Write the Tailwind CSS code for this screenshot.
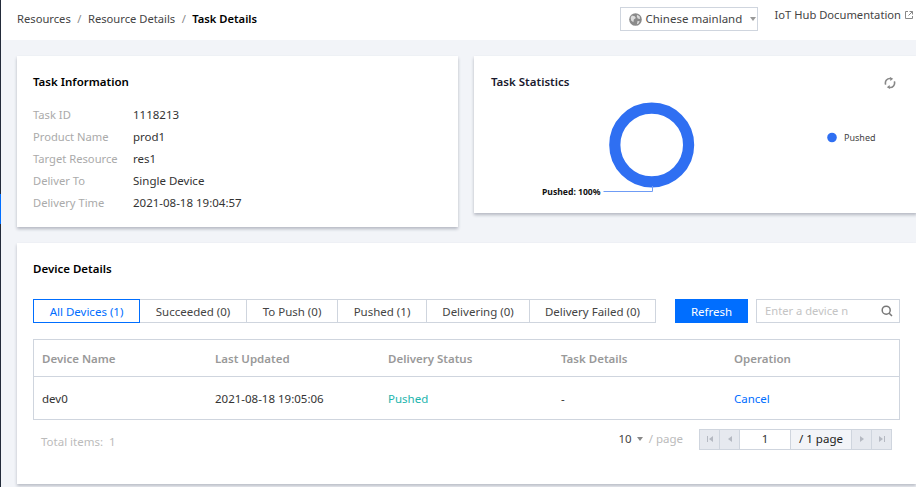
<!DOCTYPE html>
<html lang="en">
<head>
  <meta charset="UTF-8">
  <title>Task Details</title>
  <script src="https://cdn.jsdelivr.net/npm/@tailwindcss/browser@4"></script>
</head>
<body class="bg-[#f2f4f8] font-['Noto_Sans',sans-serif] text-[11.5px] text-[#333] overflow-hidden">
  <div class="flex h-[487px] w-[916px] overflow-hidden">
    <!-- sidebar edge -->
    <div class="w-px shrink-0 bg-[#232b3a] flex flex-col">
      <div class="h-[194px]"></div>
      <div class="h-[30px] bg-[#006eff]"></div>
    </div>

    <div class="flex-1 min-w-0">
      <!-- header -->
      <header class="h-10 bg-white flex items-center pl-4 pr-[3px]">
        <nav class="flex items-center gap-[6.5px] text-[#444] text-[11.2px] whitespace-nowrap mt-[-2px]">
          <span>Resources</span><span class="text-[#888]">/</span>
          <span>Resource Details</span><span class="text-[#888]">/</span>
          <span class="font-semibold text-black">Task Details</span>
        </nav>
        <div class="ml-auto flex items-center h-6 w-[138px] border border-[#cfd5de] pl-2 gap-[3px] mt-[-2px] shrink-0">
          <svg class="w-[13px] h-[13px] shrink-0" viewBox="0 0 14 14"><circle cx="7" cy="7" r="6.8" fill="#8a8a8a"/><path d="M3 2.8l3.2.6 1.2 2-2.2 1.6-.5 3L2.3 8 1.8 5zM8.6 1.8l2.8 1.6.6 3-2.6-.4-1-2.2zM9.2 8.6l2.4.4-1.6 2.6-1.5.5z" fill="#dcdcdc"/></svg>
          <span class="text-[#444] whitespace-nowrap">Chinese mainland</span>
          <span class="ml-[5px] w-0 h-0 border-x-[3px] border-x-transparent border-t-[4px] border-t-[#999]"></span>
        </div>
        <div class="ml-4 flex items-center gap-[4px] mt-[-10px] text-[#444] text-[11.2px] whitespace-nowrap shrink-0">
          <span>IoT Hub Documentation</span>
          <svg class="w-2 h-2 shrink-0" viewBox="0 0 8 8" fill="none" stroke="#888" stroke-width="1"><path d="M3 .5H.5v7h7V5M4.5.5h3v3M7.5.5L3.5 4.5"/></svg>
        </div>
      </header>

      <!-- top cards -->
      <div class="flex items-start gap-4 pl-4 pt-4">
        <section class="w-[441px] h-[171px] shrink-0 bg-white shadow-[0_2px_3px_rgba(54,58,80,0.32)] px-4 pt-[17px]">
          <h2 class="font-semibold text-black leading-[18px]">Task Information</h2>
          <dl class="mt-[13px] grid grid-cols-[100px_1fr] auto-rows-[22px] items-center">
            <dt class="text-[#aaa] text-[11.2px]">Task ID</dt><dd class="text-[#333]">1118213</dd>
            <dt class="text-[#aaa] text-[11.2px]">Product Name</dt><dd class="text-[#333]">prod1</dd>
            <dt class="text-[#aaa] text-[11.2px]">Target Resource</dt><dd class="text-[#333]">res1</dd>
            <dt class="text-[#aaa] text-[11.2px]">Deliver To</dt><dd class="text-[#333]">Single Device</dd>
            <dt class="text-[#aaa] text-[11.2px]">Delivery Time</dt><dd class="text-[#333]">2021-08-18 19:04:57</dd>
          </dl>
        </section>

        <section class="w-[443px] h-[157px] shrink-0 bg-white shadow-[0_2px_3px_rgba(54,58,80,0.32)] relative">
          <div class="flex items-center justify-between pl-[17px] pr-[21px] pt-[17px]">
            <h2 class="font-semibold text-[#1a1a2e] leading-[18px]">Task Statistics</h2>
            <svg class="w-3 h-3 mt-[2px]" viewBox="0 0 12 12" fill="none" stroke="#888" stroke-width="1.6"><path d="M1.7 7.6A4.5 4.5 0 0 1 6.8 1.6M10.3 4.4A4.5 4.5 0 0 1 5.2 10.4"/><path d="M6 0l3.2 1.7L6.4 4zM6 12L2.8 10.3 5.6 8z" fill="#888" stroke="none"/></svg>
          </div>
          <svg class="absolute left-0 top-0" width="443" height="157" viewBox="474 56 443 157">
            <circle cx="651.7" cy="145" r="36.9" fill="none" stroke="#2f6ff2" stroke-width="11.2"/>
            <path d="M652.5 186v5.5h-49" fill="none" stroke="#6f9cf5" stroke-width="1"/>
            <text x="542" y="195" font-size="8.6" font-weight="700" fill="#111" font-family="Noto Sans">Pushed: 100%</text>
            <circle cx="832" cy="137.5" r="4.8" fill="#2f6ff2"/>
            <text x="844" y="141" font-size="9" fill="#444" font-family="Noto Sans">Pushed</text>
          </svg>
        </section>
      </div>

      <!-- device details -->
      <section class="ml-4 mt-4 h-[241px] bg-white shadow-[0_2px_3px_rgba(54,58,80,0.3)] pl-4 pr-4 pt-[17px]">
        <h2 class="font-semibold text-black leading-[18px]">Device Details</h2>

        <div class="mt-[21px] flex h-6 items-stretch">
          <div class="flex h-6 text-[#444] text-center">
            <span class="w-[107px] border border-[#006eff] text-[#006eff] leading-[24px]">All Devices (1)</span>
            <span class="w-[107px] border-y border-r border-[#cfd5de] leading-[24px]">Succeeded (0)</span>
            <span class="w-[91px] border-y border-r border-[#cfd5de] leading-[24px]">To Push (0)</span>
            <span class="w-[89px] border-y border-r border-[#cfd5de] leading-[24px]">Pushed (1)</span>
            <span class="w-[103px] border-y border-r border-[#cfd5de] leading-[24px]">Delivering (0)</span>
            <span class="w-[126px] border-y border-r border-[#cfd5de] leading-[24px]">Delivery Failed (0)</span>
          </div>
          <button class="ml-[19px] w-[73px] bg-[#006eff] text-white leading-[26px]">Refresh</button>
          <div class="ml-2 w-[144px] border border-[#cfd5de] flex items-center justify-between pl-2 pr-[6px]">
            <span class="text-[#c4c4c4] whitespace-nowrap text-[11.2px] mt-px">Enter a device n</span>
            <svg class="w-3 h-3" viewBox="0 0 12 12" fill="none" stroke="#777" stroke-width="1.5"><circle cx="5.2" cy="5.2" r="4"/><path d="M8.2 8.2L11 11"/></svg>
          </div>
        </div>

        <div class="mt-4 border border-[#cfd5de]">
          <div class="grid grid-cols-[173px_173px_173px_173px_1fr] h-[37px] items-center border-b border-[#cfd5de] pl-2 pt-[2px] font-semibold text-[#999]">
            <span>Device Name</span><span>Last Updated</span><span>Delivery Status</span><span>Task Details</span><span>Operation</span>
          </div>
          <div class="grid grid-cols-[173px_173px_173px_173px_1fr] h-[42px] items-center pl-2 pt-[2px] text-[#333]">
            <span>dev0</span><span>2021-08-18 19:05:06</span><span class="text-[#1db5ad]">Pushed</span><span>-</span><span class="text-[#006eff]">Cancel</span>
          </div>
        </div>

        <div class="mt-[8px] flex items-center h-[22px] pl-2 pr-2">
          <span class="text-[#bbb] mt-[5px]">Total items:&nbsp; 1</span>
          <div class="ml-auto flex items-center text-[#444]">
            <span>10</span>
            <span class="ml-[5px] w-0 h-0 border-x-[3px] border-x-transparent border-t-[4px] border-t-[#888]"></span>
            <span class="ml-[6px] text-[#bbb]">/ page</span>
          </div>
          <div class="ml-4 flex h-[21px] w-[193px] border border-[#cfd5de] text-[#333]">
            <span class="w-5 bg-[#e6e9ef] border-r border-[#cfd5de] flex items-center justify-center"><svg class="w-2 h-2" viewBox="0 0 8 8" fill="#b5b9c2"><path d="M1 1h1v6H1zM7 1v6L3 4z"/></svg></span>
            <span class="w-5 bg-[#e6e9ef] border-r border-[#cfd5de] flex items-center justify-center"><svg class="w-2 h-2" viewBox="0 0 8 8" fill="#b5b9c2"><path d="M6 1v6L2 4z"/></svg></span>
            <span class="w-[51px] bg-white border-r border-[#cfd5de] text-center leading-[18px]">1</span>
            <span class="w-[61px] bg-[#f2f4f8] border-r border-[#cfd5de] text-center leading-[18px] text-[#222]">/ 1 page</span>
            <span class="w-5 bg-[#e6e9ef] border-r border-[#cfd5de] flex items-center justify-center"><svg class="w-2 h-2" viewBox="0 0 8 8" fill="#b5b9c2"><path d="M2 1v6l4-3z"/></svg></span>
            <span class="flex-1 bg-[#e6e9ef] flex items-center justify-center"><svg class="w-2 h-2" viewBox="0 0 8 8" fill="#b5b9c2"><path d="M7 1H6v6h1zM1 1v6l4-3z"/></svg></span>
          </div>
        </div>
      </section>
    </div>
  </div>
</body>
</html>
